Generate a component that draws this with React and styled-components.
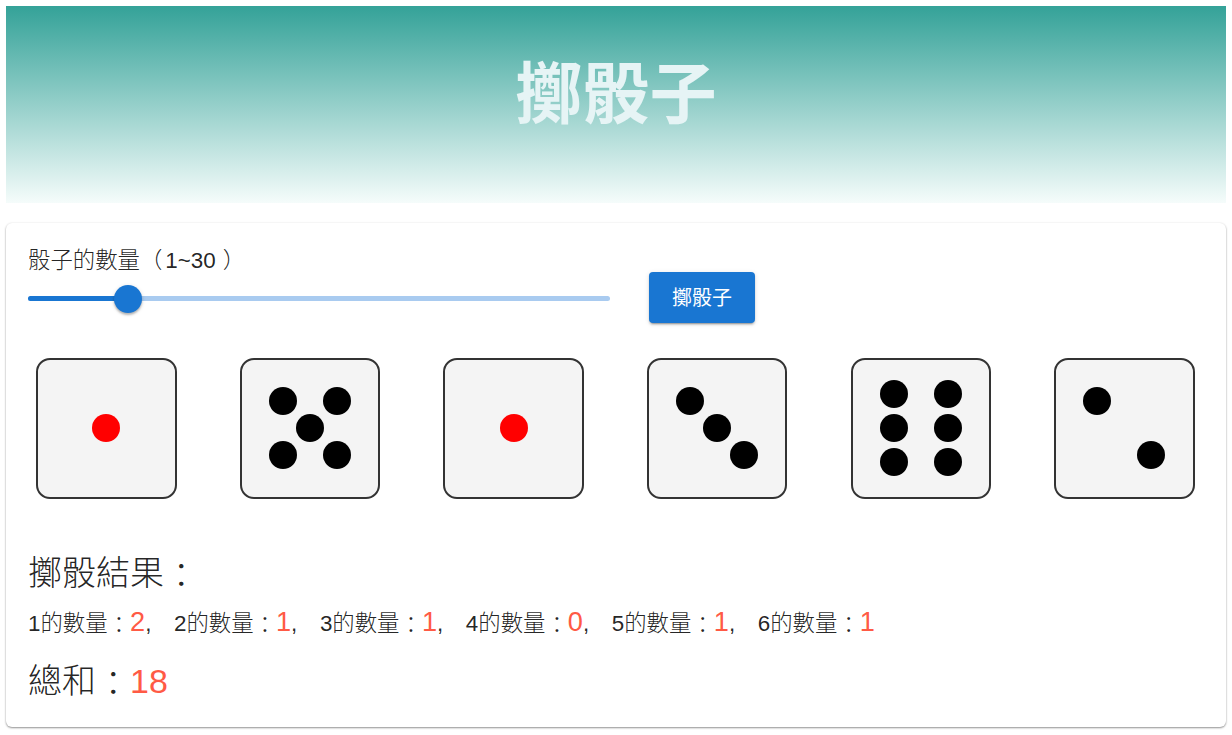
import React from "react";
import styled, { createGlobalStyle } from "styled-components";

const GlobalStyle = createGlobalStyle`
  html, body {
    margin: 0;
    padding: 0;
    background: #fff;
  }
  body {
    font-family: "Liberation Sans", "Noto Sans CJK TC", sans-serif;
    color: rgba(0, 0, 0, 0.87);
  }
`;

const Page = styled.div`
  padding: 6px 6px 8px;
  display: flex;
  flex-direction: column;
  gap: 20px;
`;

const Header = styled.header`
  height: 197px;
  display: flex;
  align-items: center;
  justify-content: center;
  background: linear-gradient(to bottom, #34a298, #f5fcfb);
`;

const Title = styled.h1`
  margin: 0 0 20px;
  font-size: 67.2px;
  line-height: 1;
  font-weight: 700;
  color: #e6f4f5;
`;

const Card = styled.main`
  height: 504px;
  box-sizing: border-box;
  padding: 22px 22px 0;
  background: #fff;
  border-radius: 6px;
  box-shadow: 0 1px 2px rgba(0, 0, 0, 0.42), 0 0 3px rgba(0, 0, 0, 0.05);
`;

const Controls = styled.section`
  display: flex;
  align-items: flex-end;
  gap: 39px;
`;

const SliderGroup = styled.div`
  width: 582px;
`;

const SliderLabel = styled.div`
  font-size: 22.4px;
  line-height: 32px;
  font-weight: 300;
`;

const OpenParen = styled.span`
  padding-right: 3px;
`;

const CloseParen = styled.span`
  padding-left: 7px;
`;

const Track = styled.div`
  position: relative;
  height: 5px;
  margin-top: 19px;
  margin-bottom: 22px;
  border-radius: 3px;
  background: #a9cbf0;
`;

const TrackFill = styled.div`
  height: 100%;
  border-radius: 3px;
  background: #1976d2;
`;

const Thumb = styled.div`
  position: absolute;
  top: 50%;
  width: 28px;
  height: 28px;
  border-radius: 50%;
  background: #1976d2;
  transform: translate(-50%, -50%);
  box-shadow: 0 2px 2px rgba(0, 0, 0, 0.22), 0 1px 4px rgba(0, 0, 0, 0.14);
`;

const RollButton = styled.button`
  width: 106px;
  height: 51px;
  padding: 0 0 3px;
  border: 0;
  border-radius: 4px;
  background: #1976d2;
  color: #fff;
  font: inherit;
  font-size: 20px;
  cursor: pointer;
  box-shadow: 0 3px 1px -2px rgba(0, 0, 0, 0.2), 0 2px 2px rgba(0, 0, 0, 0.14),
    0 1px 5px rgba(0, 0, 0, 0.12);
`;

const DiceRow = styled.section`
  display: flex;
  justify-content: space-between;
  padding: 0 9.4px 0 8.2px;
  margin-top: 35px;
`;

const Die = styled.div`
  position: relative;
  width: 140.4px;
  height: 140.6px;
  box-sizing: border-box;
  border: 2px solid #333;
  border-radius: 14px;
  background: #f4f4f4;
`;

const Pip = styled.span`
  position: absolute;
  width: 28px;
  height: 28px;
  margin: -14px 0 0 -14px;
  border-radius: 50%;
  background: ${(p) => (p.$red ? "#f00" : "#000")};
`;

const Results = styled.section`
  margin-top: 50.4px;
`;

const ResultHeading = styled.h2`
  margin: 0;
  font-size: 34px;
  line-height: 49px;
  font-weight: 300;
`;

const Counts = styled.p`
  margin: 0;
  font-size: 22.4px;
  line-height: 48px;
  font-weight: 300;
  white-space: pre;
`;

const CountValue = styled.span`
  font-size: 27.2px;
  color: #ff5a45;
`;

const Comma = styled.span`
  display: inline-block;
  width: 28.8px;
`;

// the CJK colon sits high in this font, nudge it down onto the text's middle
const Colon = styled.span`
  display: inline-block;
  transform: translate(0.01em, 0.1em);
`;

const Total = styled.h2`
  margin: 8px 0 0;
  font-size: 34px;
  line-height: 50px;
  font-weight: 300;
`;

const TotalValue = styled.span`
  color: #ff5a45;
`;

const PIPS = {
  1: [[50, 50]],
  2: [[30.2, 30.2], [69.8, 69.8]],
  3: [[30.2, 30.2], [50, 50], [69.8, 69.8]],
  5: [[30.2, 30.2], [69.8, 30.2], [50, 50], [30.2, 69.8], [69.8, 69.8]],
  6: [[30.2, 25.1], [69.8, 25.1], [30.2, 50], [69.8, 50], [30.2, 74.9], [69.8, 74.9]],
};

const DICE = [1, 5, 1, 3, 6, 2];
const COUNTS = [2, 1, 1, 0, 1, 1];

const Dice = ({ value }) => (
  <Die>
    {PIPS[value].map(([x, y], i) => (
      <Pip key={i} $red={value === 1} style={{ left: `${x}%`, top: `${y}%` }} />
    ))}
  </Die>
);

const App = () => {
  const percent = ((6 - 1) / 29) * 100;

  return (
    <Page>
      <GlobalStyle />
      <Header>
        <Title>擲骰子</Title>
      </Header>
      <Card>
        <Controls>
          <SliderGroup>
            <SliderLabel>
              骰子的數量<OpenParen>（</OpenParen>1~30<CloseParen>）</CloseParen>
            </SliderLabel>
            <Track>
              <TrackFill style={{ width: `${percent}%` }} />
              <Thumb style={{ left: `${percent}%` }} />
            </Track>
          </SliderGroup>
          <RollButton>擲骰子</RollButton>
        </Controls>
        <DiceRow>
          {DICE.map((value, i) => (
            <Dice key={i} value={value} />
          ))}
        </DiceRow>
        <Results>
          <ResultHeading>
            擲骰結果<Colon>：</Colon>
          </ResultHeading>
          <Counts>
            {COUNTS.map((count, i) => (
              <span key={i}>
                {i + 1}的數量<Colon>：</Colon>
                <CountValue>{count}</CountValue>
                {i < 5 && <Comma>,</Comma>}
              </span>
            ))}
          </Counts>
          <Total>
            總和<Colon>：</Colon>
            <TotalValue>18</TotalValue>
          </Total>
        </Results>
      </Card>
    </Page>
  );
};

export default App;
